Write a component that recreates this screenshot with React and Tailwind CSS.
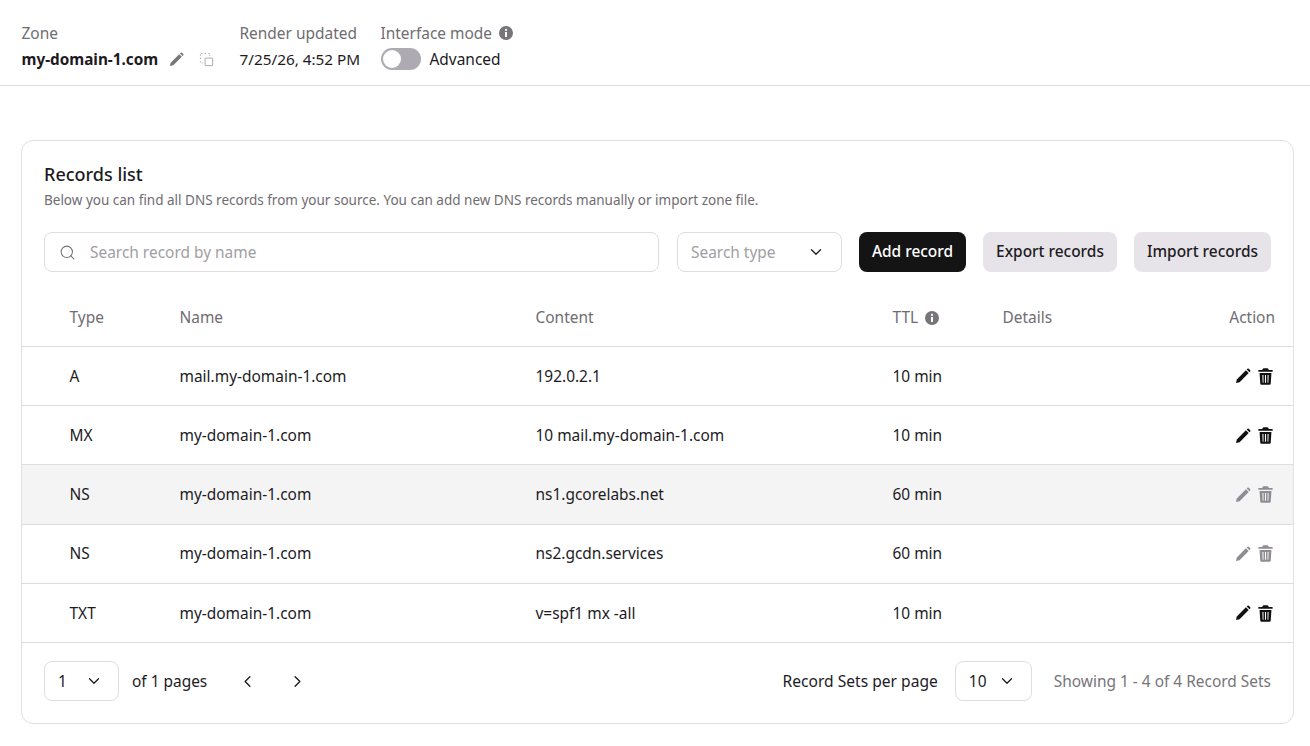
import { ChevronDown, ChevronLeft, ChevronRight, Search } from 'lucide-react';

const rows = [
  { type: 'A', name: 'mail.my-domain-1.com', content: '192.0.2.1', ttl: '10 min', muted: false },
  { type: 'MX', name: 'my-domain-1.com', content: '10 mail.my-domain-1.com', ttl: '10 min', muted: false },
  { type: 'NS', name: 'my-domain-1.com', content: 'ns1.gcorelabs.net', ttl: '60 min', muted: true, hover: true },
  { type: 'NS', name: 'my-domain-1.com', content: 'ns2.gcdn.services', ttl: '60 min', muted: true },
  { type: 'TXT', name: 'my-domain-1.com', content: 'v=spf1 mx -all', ttl: '10 min', muted: false },
];

const InfoIcon = ({ className }) => (
  <svg viewBox="0 0 16 16" className={className} fill="currentColor">
    <path fillRule="evenodd" d="M8 1a7 7 0 1 1 0 14A7 7 0 0 1 8 1Zm-1 6v5h2V7H7Zm1-3.2a1.1 1.1 0 1 0 0 2.2 1.1 1.1 0 0 0 0-2.2Z" />
  </svg>
);

const PencilIcon = ({ className }) => (
  <svg viewBox="0 0 16 16" className={className} fill="currentColor">
    <path d="M1 15l.8-3.6L10.9 2.3l2.8 2.8-9.1 9.1L1 15Z" />
    <path d="M11.7 1.5l.7-.7a1 1 0 0 1 1.4 0l1.4 1.4a1 1 0 0 1 0 1.4l-.7.7-2.8-2.8Z" />
  </svg>
);

const TrashIcon = ({ className }) => (
  <svg viewBox="0 0 16 16" className={className} fill="currentColor">
    <path d="M5.600 1.600A1 1 0 0 1 6.500 1h3a1 1 0 0 1 .9.6l.4.9h3.200v1.600H2V2.500h3.200l.4-.9Z" />
    <path fillRule="evenodd" d="M3 5h10l-.6 9.100a1 1 0 0 1-1 .9H4.600a1 1 0 0 1-1-.9L3 5Zm2.400 1.800.2 6.400h.7V6.800h-.9Zm2.150 0v6.400h.9V6.800h-.9Zm2.150 0v6.400h.7l.2-6.400h-.9Z" />
  </svg>
);

const CopyIcon = ({ className }) => (
  <svg viewBox="0 0 16 16" className={className} fill="none" stroke="currentColor" strokeWidth="1">
    <rect x="6.500" y="6.500" width="8" height="8" rx="0.5" />
    <path d="M1.500 4V2.500a1 1 0 0 1 1-1H4M6 1.500h2M10 1.500h.5a1 1 0 0 1 1 1V4M1.500 6v2M1.500 10v.5a1 1 0 0 0 1 1H4" strokeDasharray="1.500 1" />
  </svg>
);

const SelectBox = ({ value, className, textClass }) => (
  <div className={`flex h-10 items-center justify-between rounded-lg border border-[#dfdde0] bg-white ${className}`}>
    <span className={textClass}>{value}</span>
    <ChevronDown size={18} strokeWidth={1.7} className="text-[#1c1c1c]" />
  </div>
);

const App = () => {
  return (
    <div className="min-h-[746px] bg-white font-['Noto_Sans',sans-serif] text-[15.45px] text-[#1d1b1f]">
      <header className="flex h-[86px] items-start gap-5 border-b border-[#dedcdf] px-[21.500px] pt-[22px]">
        <div className="w-[198px]">
          <div className="leading-[22px] text-[#6f6c72]">Zone</div>
          <div className="mt-[4px] flex h-[22px] items-center">
            <span className="text-[15.3px] leading-[22px] font-bold">my-domain-1.com</span>
            <PencilIcon className="ml-[11px] h-[15px] w-[15px] text-[#77747a]" />
            <CopyIcon className="ml-[15px] h-[15px] w-[15px] text-[#a5a3a8]" />
          </div>
        </div>
        <div className="w-[121px]">
          <div className="leading-[22px] whitespace-nowrap text-[#6f6c72]">Render updated</div>
          <div className="mt-[4px] text-[15.3px] leading-[22px] whitespace-nowrap">7/25/26, 4:52 PM</div>
        </div>
        <div>
          <div className="flex items-center gap-[6px] leading-[22px] text-[#6f6c72]">
            Interface mode
            <InfoIcon className="h-4 w-4 text-[#77747a]" />
          </div>
          <div className="mt-[4px] flex h-[22px] items-center gap-[9px]">
            <div className="flex h-[22px] w-10 items-center rounded-full bg-[#aeaab2] pl-[2px]">
              <div className="h-[18px] w-[18px] rounded-full bg-white" />
            </div>
            <span className="leading-[22px]">Advanced</span>
          </div>
        </div>
      </header>

      <main className="px-[21px] pt-[54px] pr-[16px]">
        <section className="h-[584px] rounded-xl border border-[#e2e0e3] bg-white">
          <div className="px-[22px] pt-[20px]">
            <h2 className="text-[18px] leading-[26px] font-medium">Records list</h2>
            <p className="mt-[4px] text-[13.5px] leading-[18px] text-[#6f6c72]">
              Below you can find all DNS records from your source. You can add new DNS records manually or import zone file.
            </p>
            <div className="mt-[23px] flex items-center">
              <div className="flex h-10 w-[615px] items-center gap-[14px] rounded-lg border border-[#dfdde0] px-[14px]">
                <Search size={17} strokeWidth={1.5} className="text-[#77747a]" />
                <span className="pt-[1px] text-[#a19ea4]">Search record by name</span>
              </div>
              <SelectBox value="Search type" className="ml-[18px] w-[165px] pr-[16px] pl-[13px]" textClass="pt-[1px] text-[#a19ea4]" />
              <button className="ml-[17px] h-10 w-[107px] rounded-lg bg-[#141414] font-medium text-white">Add record</button>
              <button className="ml-[17px] h-10 w-[134px] rounded-lg bg-[#e6e4e8] font-medium">Export records</button>
              <button className="ml-[17px] h-10 w-[137px] rounded-lg bg-[#e6e4e8] font-medium">Import records</button>
            </div>
          </div>

          <div className="mt-[18px] grid h-[56px] grid-cols-[110px_356px_357px_110px_1fr_auto] items-center pr-[18px] pl-[47.500px] text-[#6f6c72]">
            <span>Type</span>
            <span>Name</span>
            <span>Content</span>
            <span className="flex items-center gap-[6px]">
              TTL
              <InfoIcon className="h-4 w-4 text-[#77747a]" />
            </span>
            <span>Details</span>
            <span>Action</span>
          </div>

          {rows.map((row, i) => (
            <div
              key={i}
              className={`grid h-[59.200px] grid-cols-[110px_356px_357px_110px_1fr_auto] items-center border-t border-[#dedcdf] pt-[0.5px] pr-[18px] pl-[47.500px] ${row.hover ? 'bg-[#f4f4f4]' : ''}`}
            >
              <span>{row.type}</span>
              <span>{row.name}</span>
              <span>{row.content}</span>
              <span>{row.ttl}</span>
              <span />
              <span className={`flex items-center gap-[5px] ${row.muted ? 'text-[#8f8c93]' : 'text-[#111111]'}`}>
                <PencilIcon className="h-4 w-4" />
                <TrashIcon className="h-[19px] w-[19px]" />
              </span>
            </div>
          ))}

          <div className="flex h-[80px] items-center border-t border-[#dedcdf] pr-[22px] pb-[2px] pl-[22px]">
            <SelectBox value="1" className="w-[75px] pr-[15px] pl-[13px]" />
            <span className="ml-[13px]">of 1 pages</span>
            <ChevronLeft size={19} strokeWidth={1.7} className="ml-[30.500px]" />
            <ChevronRight size={19} strokeWidth={1.7} className="ml-[31px]" />
            <span className="ml-auto text-[15.6px]">Record Sets per page</span>
            <SelectBox value="10" className="ml-[17px] w-[77px] pr-[15px] pl-[13px]" />
            <span className="ml-[22px] text-[#77747a]">Showing 1 - 4 of 4 Record Sets</span>
          </div>
        </section>
      </main>
    </div>
  );
};

export default App;
